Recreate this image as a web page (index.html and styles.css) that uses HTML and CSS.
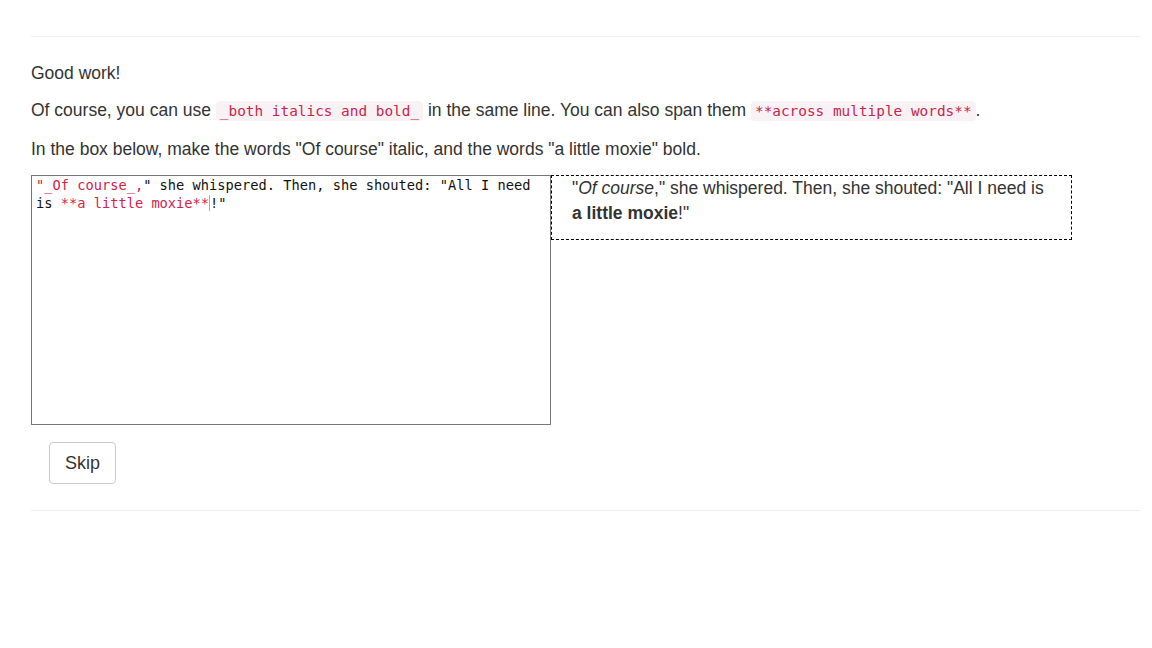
FILE: index.html
```html
<!DOCTYPE html>
<html>
<head>
<meta charset="utf-8">
<link rel="stylesheet" href="styles.css">
</head>
<body>
<div class="page">
  <hr class="rule">
  <div class="lesson">
    <p>Good work!</p>
    <p>Of course, you can use <code>_both italics and bold_</code> in the same line. You can also span them <code>**across multiple words**</code>.</p>
    <p>In the box below, make the words "Of course" italic, and the words "a little moxie" bold.</p>
    <div class="exercise">
      <div class="editor"><span class="md">"_Of course_,</span><span>" she whispered. Then, she shouted: "All I need </span><span>is </span><span class="md">**a little moxie**</span><span class="caret"></span><span>!"</span></div>
      <div class="preview">
        <p>"<em>Of course</em>," she whispered. Then, she shouted: "All I need is <strong>a little moxie</strong>!"</p>
      </div>
    </div>
    <div class="actions">
      <button class="btn">Skip</button>
    </div>
  </div>
  <hr class="rule">
</div>
</body>
</html>
```

FILE: styles.css
```css
html, body {
  margin: 0;
  padding: 0;
  background: #fff;
}

body {
  font-family: "Liberation Sans", Arial, sans-serif;
  font-size: 17.5px;
  line-height: 23px;
  color: #333;
}

.page {
  margin: 0 12px 0 31px;
  padding-top: 36px;
}

.rule {
  margin: 0;
  border: 0;
  border-top: 1px solid #eee;
}

.lesson {
  padding-top: 24.5px;
}

.lesson > p {
  margin: 0 0 14.5px;
}

code {
  font-family: "DejaVu Sans Mono", "Liberation Mono", monospace;
  font-size: 14.4px;
  padding: 2px 4px;
  color: #c7254e;
  background: #f9f2f4;
  border-radius: 4px;
}

.exercise {
  display: flex;
  align-items: flex-start;
}

.editor {
  box-sizing: border-box;
  width: 520px;
  height: 250px;
  border: 1px solid #767676;
  padding: 0 14px 0 4px;
  font-family: "DejaVu Sans Mono", "Liberation Mono", monospace;
  font-size: 13.7px;
  line-height: 18px;
  color: #111;
  white-space: pre-wrap;
}

.md {
  color: #d6204a;
}

.caret {
  display: inline-block;
  width: 1px;
  height: 16px;
  background: #aaa;
  vertical-align: -3px;
}

.preview {
  box-sizing: border-box;
  width: 521px;
  border: 1px dashed #000;
  padding: 0 20px 0 20px;
  line-height: 25px;
}

.preview p {
  margin: 0 0 13px;
}

.preview strong {
  font-weight: bold;
}

.actions {
  padding: 17px 0 26px 18px;
}

.btn {
  font-family: "Liberation Sans", Arial, sans-serif;
  font-size: 18px;
  line-height: 24px;
  color: #333;
  background: #fff;
  border: 1px solid #ccc;
  border-radius: 4px;
  padding: 8px 15px;
  margin: 0;
}
```
